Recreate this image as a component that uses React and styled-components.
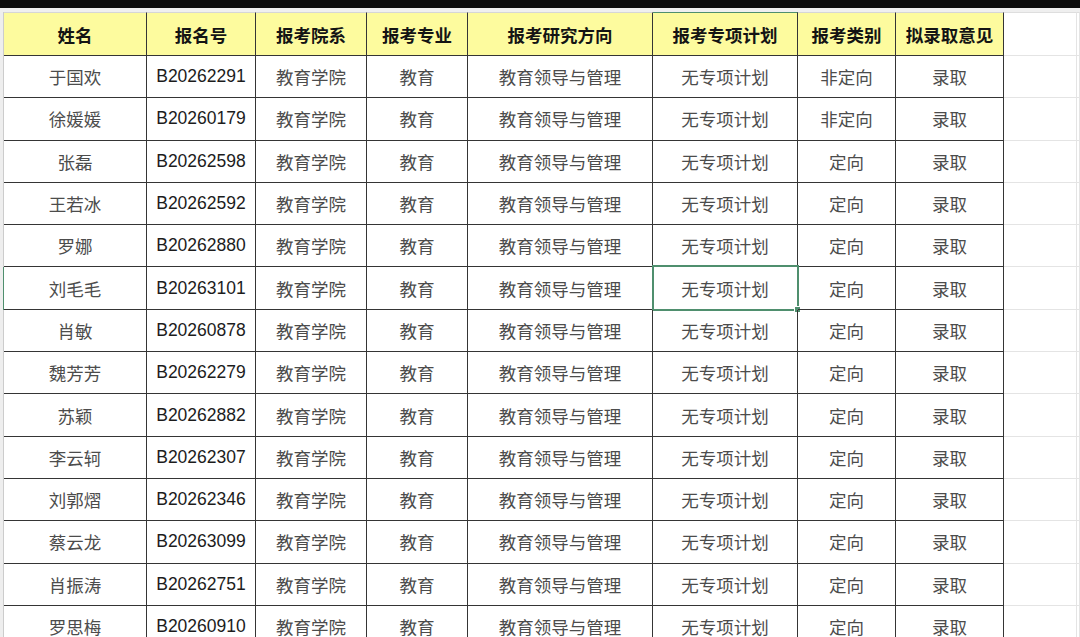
import React from "react";
import styled, { createGlobalStyle, css } from "styled-components";

const Global = createGlobalStyle`
  html, body { margin: 0; padding: 0; background: #ffffff; }
  body { font-family: "Noto Sans CJK SC", "Noto Sans", sans-serif; overflow: hidden; }
`;

const COLS = "4px 143px 109px 111px 101px 185px 145px 98px 108px 73px 1fr";
const LINE = "#353535";
const GRID = "#e4e4e4";
const GREEN = "#4f8f6e";

const Page = styled.div`
  width: 1080px;
  height: 637px;
  overflow: hidden;
  background: #fff;
  display: flex;
  flex-direction: column;
`;

const TopBar = styled.div`
  height: 8px;
  flex: none;
  background: #0c0c0c;
`;

const TopBand = styled.div`
  height: 4px;
  flex: none;
  background: #efefef;
  border-bottom: 0;
`;

const Row = styled.div`
  display: grid;
  grid-template-columns: ${COLS};
  flex: none;
  height: ${(p) => (p.$header ? "44px" : "42.3px")};
`;

const Gutter = styled.div`
  box-sizing: border-box;
  background: #eeeeee;
  border-right: 1px solid ${(p) => (p.$active ? GREEN : "#cccccc")};
`;

const Cell = styled.div`
  box-sizing: border-box;
  position: relative;
  display: flex;
  align-items: center;
  justify-content: center;
  border-right: 1px solid ${LINE};
  border-bottom: 1px solid ${LINE};
  font-size: 17.5px;
  color: #4c4c4c;
  white-space: nowrap;
  ${(p) =>
    p.$header &&
    css`
      background: #fdfb9e;
      color: #141414;
      font-weight: 700;
      border-top: 1px solid ${p.$activeCol ? GREEN : "#d6d6d6"};
    `}
  ${(p) =>
    p.$mono &&
    css`
      font-family: "Liberation Sans", Arial, sans-serif;
      color: #1c1c1c;
      font-size: 17.5px;
    `}
`;

const Blank = styled.div`
  box-sizing: border-box;
  border-right: 1px solid ${GRID};
  border-bottom: 1px solid ${GRID};
  ${(p) => p.$header && css`border-top: 1px solid #dedede;`}
`;

const Selection = styled.div`
  position: absolute;
  left: -1px;
  top: -2px;
  right: -2px;
  bottom: -2px;
  border: 2px solid ${GREEN};
  pointer-events: none;
`;

const Handle = styled.div`
  position: absolute;
  right: -4px;
  bottom: -4px;
  width: 5px;
  height: 5px;
  background: ${GREEN};
  border: 1px solid #fff;
`;

const headers = ["姓名", "报名号", "报考院系", "报考专业", "报考研究方向", "报考专项计划", "报考类别", "拟录取意见"];

const rows = [
  ["于国欢", "B20262291", "非定向"],
  ["徐媛媛", "B20260179", "非定向"],
  ["张磊", "B20262598", "定向"],
  ["王若冰", "B20262592", "定向"],
  ["罗娜", "B20262880", "定向"],
  ["刘毛毛", "B20263101", "定向"],
  ["肖敏", "B20260878", "定向"],
  ["魏芳芳", "B20262279", "定向"],
  ["苏颖", "B20262882", "定向"],
  ["李云轲", "B20262307", "定向"],
  ["刘郭熠", "B20262346", "定向"],
  ["蔡云龙", "B20263099", "定向"],
  ["肖振涛", "B20262751", "定向"],
  ["罗思梅", "B20260910", "定向"],
];

const SELECTED_ROW = 5;

export default function App() {
  return (
    <>
      <Global />
      <Page>
        <TopBar />
        <TopBand />
        <Row $header>
          <Gutter />
          {headers.map((h, i) => (
            <Cell key={h} $header $activeCol={i === 5}>
              {h}
            </Cell>
          ))}
          <Blank $header />
          <Blank $header />
        </Row>
        {rows.map(([name, id, type], r) => {
          const active = r === SELECTED_ROW;
          return (
            <Row key={id}>
              <Gutter $active={active} />
              <Cell>{name}</Cell>
              <Cell $mono>{id}</Cell>
              <Cell>教育学院</Cell>
              <Cell>教育</Cell>
              <Cell>教育领导与管理</Cell>
              <Cell>
                无专项计划
                {active && (
                  <Selection>
                    <Handle />
                  </Selection>
                )}
              </Cell>
              <Cell>{type}</Cell>
              <Cell>录取</Cell>
              <Blank />
              <Blank />
            </Row>
          );
        })}
      </Page>
    </>
  );
}
